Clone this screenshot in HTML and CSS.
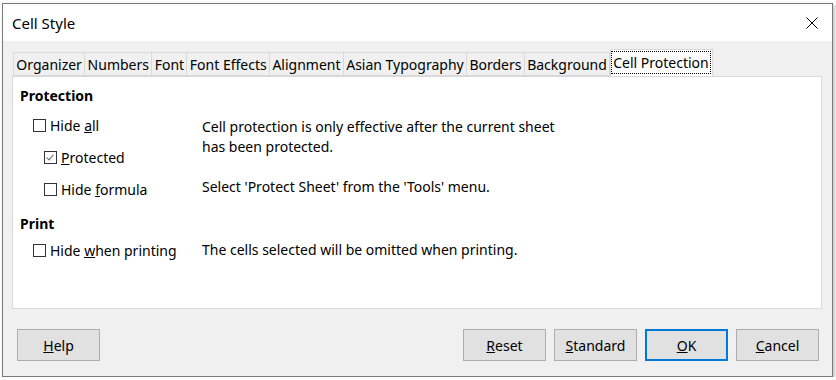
FILE: index.html
```html
<!DOCTYPE html>
<html lang="en">
<head>
    <meta charset="UTF-8">
    <title>Cell Style</title>
    <link rel="stylesheet" href="styles.css">
</head>
<body>

<div class="window">
    <div class="titlebar">
        <span class="title">Cell Style</span>
        <svg class="close" width="12" height="12" viewBox="0 0 12 12">
            <path d="M0.5 0.5 L11.5 11.5 M11.5 0.5 L0.5 11.5" stroke="#000" stroke-width="1" fill="none"/>
        </svg>
    </div>

    <div class="content">
        <div class="tabs">
            <div class="tab">Organizer</div>
            <div class="tab">Numbers</div>
            <div class="tab">Font</div>
            <div class="tab">Font Effects</div>
            <div class="tab">Alignment</div>
            <div class="tab">Asian Typography</div>
            <div class="tab">Borders</div>
            <div class="tab">Background</div>
            <div class="tab active"><span class="focus">Cell Protection</span></div>
        </div>

        <div class="panel">
            <div class="heading">Protection</div>
            <div class="group">
                <div class="checks">
                    <label class="check"><span class="box"></span><span>Hide <u>a</u>ll</span></label>
                    <label class="check sub"><span class="box checked"></span><span><u>P</u>rotected</span></label>
                    <label class="check sub"><span class="box"></span><span>Hide <u>f</u>ormula</span></label>
                </div>
                <div class="notes">
                    <p>Cell protection is only effective after the current sheet<br>has been protected.</p>
                    <p>Select 'Protect Sheet' from the 'Tools' menu.</p>
                </div>
            </div>

            <div class="heading print">Print</div>
            <div class="group tight">
                <div class="checks">
                    <label class="check"><span class="box"></span><span>Hide <u>w</u>hen printing</span></label>
                </div>
                <div class="notes single">
                    <p>The cells selected will be omitted when printing.</p>
                </div>
            </div>
        </div>

        <div class="buttons">
            <button class="btn"><u>H</u>elp</button>
            <div class="spacer"></div>
            <button class="btn"><u>R</u>eset</button>
            <button class="btn"><u>S</u>tandard</button>
            <button class="btn default"><u>O</u>K</button>
            <button class="btn"><u>C</u>ancel</button>
        </div>
    </div>
</div>

</body>
</html>
```

FILE: styles.css
```css
body { margin: 0; background: #fff; font-family: "Noto Sans", "Open Sans", sans-serif; font-size: 14px; color: #000; }
.window { margin: 3px 0 0 2px; width: 831px; height: 374px; box-sizing: border-box; border: 1px solid #7a7a7a; box-shadow: 2px 2px 4px rgba(0,0,0,0.25); display: flex; flex-direction: column; background: #f0f0f0; }
.titlebar { height: 37px; background: #fff; display: flex; align-items: center; justify-content: space-between; padding: 0 14px 0 9px; }
.title { font-size: 15px; }
.close { display: block; }

.content { flex: 1; padding: 11px 10px 0 9px; display: flex; flex-direction: column; }
.tabs { display: flex; height: 24px; padding-left: 1px; position: relative; z-index: 1; }
.tab { border: 1px solid #d9d9d9; border-right: none; padding: 0 2.35px; line-height: 23px; background: #f0f0f0; white-space: nowrap; }
.tab:nth-last-child(2) { border-right: 1px solid #d9d9d9; }
.tab.active { background: #fff; border: 1px solid #d9d9d9; border-bottom: none; margin-top: -3px; height: 27px; box-sizing: border-box; padding: 2px 2px 0 1px; line-height: 21px; }
.focus { display: block; outline: 1px dotted #000; padding: 0 1px; }

.panel { height: 233px; box-sizing: border-box; background: #fff; border: 1px solid #d9d9d9; padding: 9px 8px 0 7px; }
.heading { font-weight: bold; line-height: 20px; }
.heading.print { margin-top: 9px; }
.group { display: grid; grid-template-columns: 182px 1fr; margin-top: 3px; }
.group.tight { margin-top: 0; }
.checks { display: flex; flex-direction: column; padding-left: 13px; }
.check { display: flex; align-items: center; height: 32px; white-space: nowrap; }
.check.sub { padding-left: 11px; }
.box { width: 13px; height: 13px; box-sizing: border-box; border: 1px solid #333; background: #fff; margin-right: 4px; position: relative; }
.box.checked::after { content: ""; position: absolute; left: 3px; top: 1px; width: 3px; height: 6px; border: solid #666; border-width: 0 1px 1px 0; transform: rotate(40deg); }
.notes { padding-top: 8px; }
.notes p { margin: 0 0 20px; line-height: 20px; }
.notes p:last-child { margin-bottom: 0; }
.notes.single { padding-top: 6px; }

.buttons { display: flex; gap: 8px; margin-top: 20px; padding: 0 3px 0 5px; }
.spacer { flex: 1; }
.btn { width: 83px; height: 32px; background: #e1e1e1; border: 1px solid #adadad; font-family: inherit; font-size: 14px; color: #000; padding: 0; }
.btn.default { border: 2px solid #0078d7; }
```
